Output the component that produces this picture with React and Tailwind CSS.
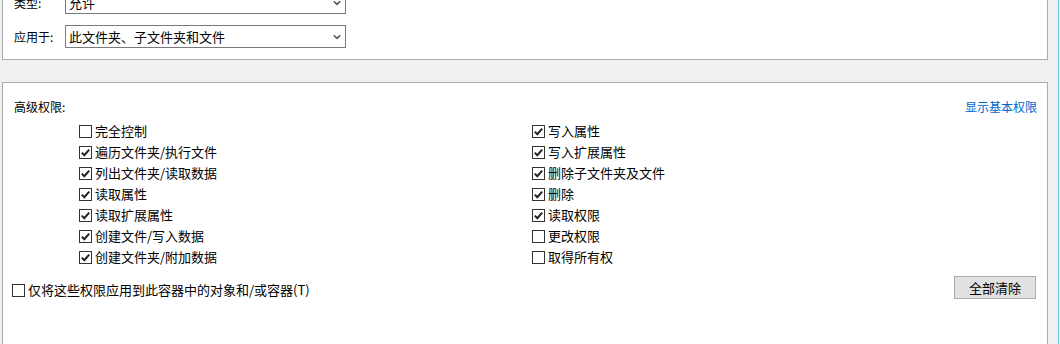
import { useState } from 'react';

const leftPerms = [
  ['完全控制', false],
  ['遍历文件夹/执行文件', true],
  ['列出文件夹/读取数据', true],
  ['读取属性', true],
  ['读取扩展属性', true],
  ['创建文件/写入数据', true],
  ['创建文件夹/附加数据', true],
];

const rightPerms = [
  ['写入属性', true],
  ['写入扩展属性', true],
  ['删除子文件夹及文件', true],
  ['删除', true],
  ['读取权限', true],
  ['更改权限', false],
  ['取得所有权', false],
];

function Check({ checked, onToggle }) {
  return (
    <span
      onClick={onToggle}
      className="w-[13px] h-[13px] shrink-0 border border-[#333] bg-white flex items-center justify-center"
    >
      {checked && (
        <svg width="11" height="11" viewBox="0 0 11 11">
          <path d="M1.8 5.6 L4.3 8.2 L9.2 2.6" fill="none" stroke="#222" strokeWidth="2" />
        </svg>
      )}
    </span>
  );
}

function Chevron() {
  return (
    <svg width="8" height="6" viewBox="0 0 8 6" className="mr-[4px]">
      <path d="M0.8 1.2 L4 4.4 L7.2 1.2" fill="none" stroke="#555" strokeWidth="1.6" />
    </svg>
  );
}

function Select({ value }) {
  return (
    <div className="w-[281px] h-[23px] border border-[#7a7a7a] bg-white flex items-center justify-between pl-[3px] text-[13px]">
      <span>{value}</span>
      <Chevron />
    </div>
  );
}

function PermRow({ label, checked, onToggle }) {
  return (
    <div className="h-[21px] flex items-center gap-[3px]">
      <Check checked={checked} onToggle={onToggle} />
      <span className="text-[13px] -mt-[1px]">{label}</span>
    </div>
  );
}

export default function App() {
  const [left, setLeft] = useState(leftPerms.map((p) => p[1]));
  const [right, setRight] = useState(rightPerms.map((p) => p[1]));
  const [onlyHere, setOnlyHere] = useState(false);

  const flip = (arr, set, i) => set(arr.map((v, j) => (j === i ? !v : v)));

  return (
    <div
      className="w-[1060px] h-[344px] overflow-hidden bg-[#f0f0f0] flex text-[12px] text-black leading-[16px]"
      style={{ fontFamily: '"Noto Sans CJK SC", "Noto Sans", sans-serif' }}
    >
      <div className="w-[1058px] pl-[2px]">
        {/* 类型 / 应用于 */}
        <div className="w-[1046px] -mt-[20px] border border-[#acacac] bg-white pt-[10px] pb-[11px] pl-[11px] flex flex-col gap-[11px]">
          <div className="flex items-center">
            <span className="w-[51px]">类型:</span>
            <Select value="允许" />
          </div>
          <div className="flex items-center">
            <span className="w-[51px]">应用于:</span>
            <Select value="此文件夹、子文件夹和文件" />
          </div>
        </div>

        {/* 高级权限 */}
        <div className="w-[1046px] h-[300px] mt-[22px] border border-[#acacac] bg-white pt-[16px]">
          <div className="flex justify-between pl-[11px] pr-[10px]">
            <span>高级权限:</span>
            <span className="text-[#0066cc] cursor-pointer">显示基本权限</span>
          </div>

          <div className="mt-[6px] pl-[76px] grid grid-cols-[453px_1fr]">
            <div>
              {leftPerms.map(([label], i) => (
                <PermRow key={label} label={label} checked={left[i]} onToggle={() => flip(left, setLeft, i)} />
              ))}
            </div>
            <div>
              {rightPerms.map(([label], i) => (
                <PermRow key={label} label={label} checked={right[i]} onToggle={() => flip(right, setRight, i)} />
              ))}
            </div>
          </div>

          <div className="mt-[8px] flex items-start justify-between pl-[9px] pr-[11px]">
            <div className="mt-[7px] flex items-center gap-[3px]">
              <Check checked={onlyHere} onToggle={() => setOnlyHere(!onlyHere)} />
              <span className="-mt-[1px] text-[13px]">仅将这些权限应用到此容器中的对象和/或容器(T)</span>
            </div>
            <button className="w-[82px] h-[23px] bg-[#e1e1e1] border border-[#adadad] flex items-center justify-center text-[13px]">
              全部清除
            </button>
          </div>
        </div>
      </div>
      <div className="w-px bg-[#6fc1ea]" />
      <div className="w-px bg-[#f0f0f0]" />
    </div>
  );
}
